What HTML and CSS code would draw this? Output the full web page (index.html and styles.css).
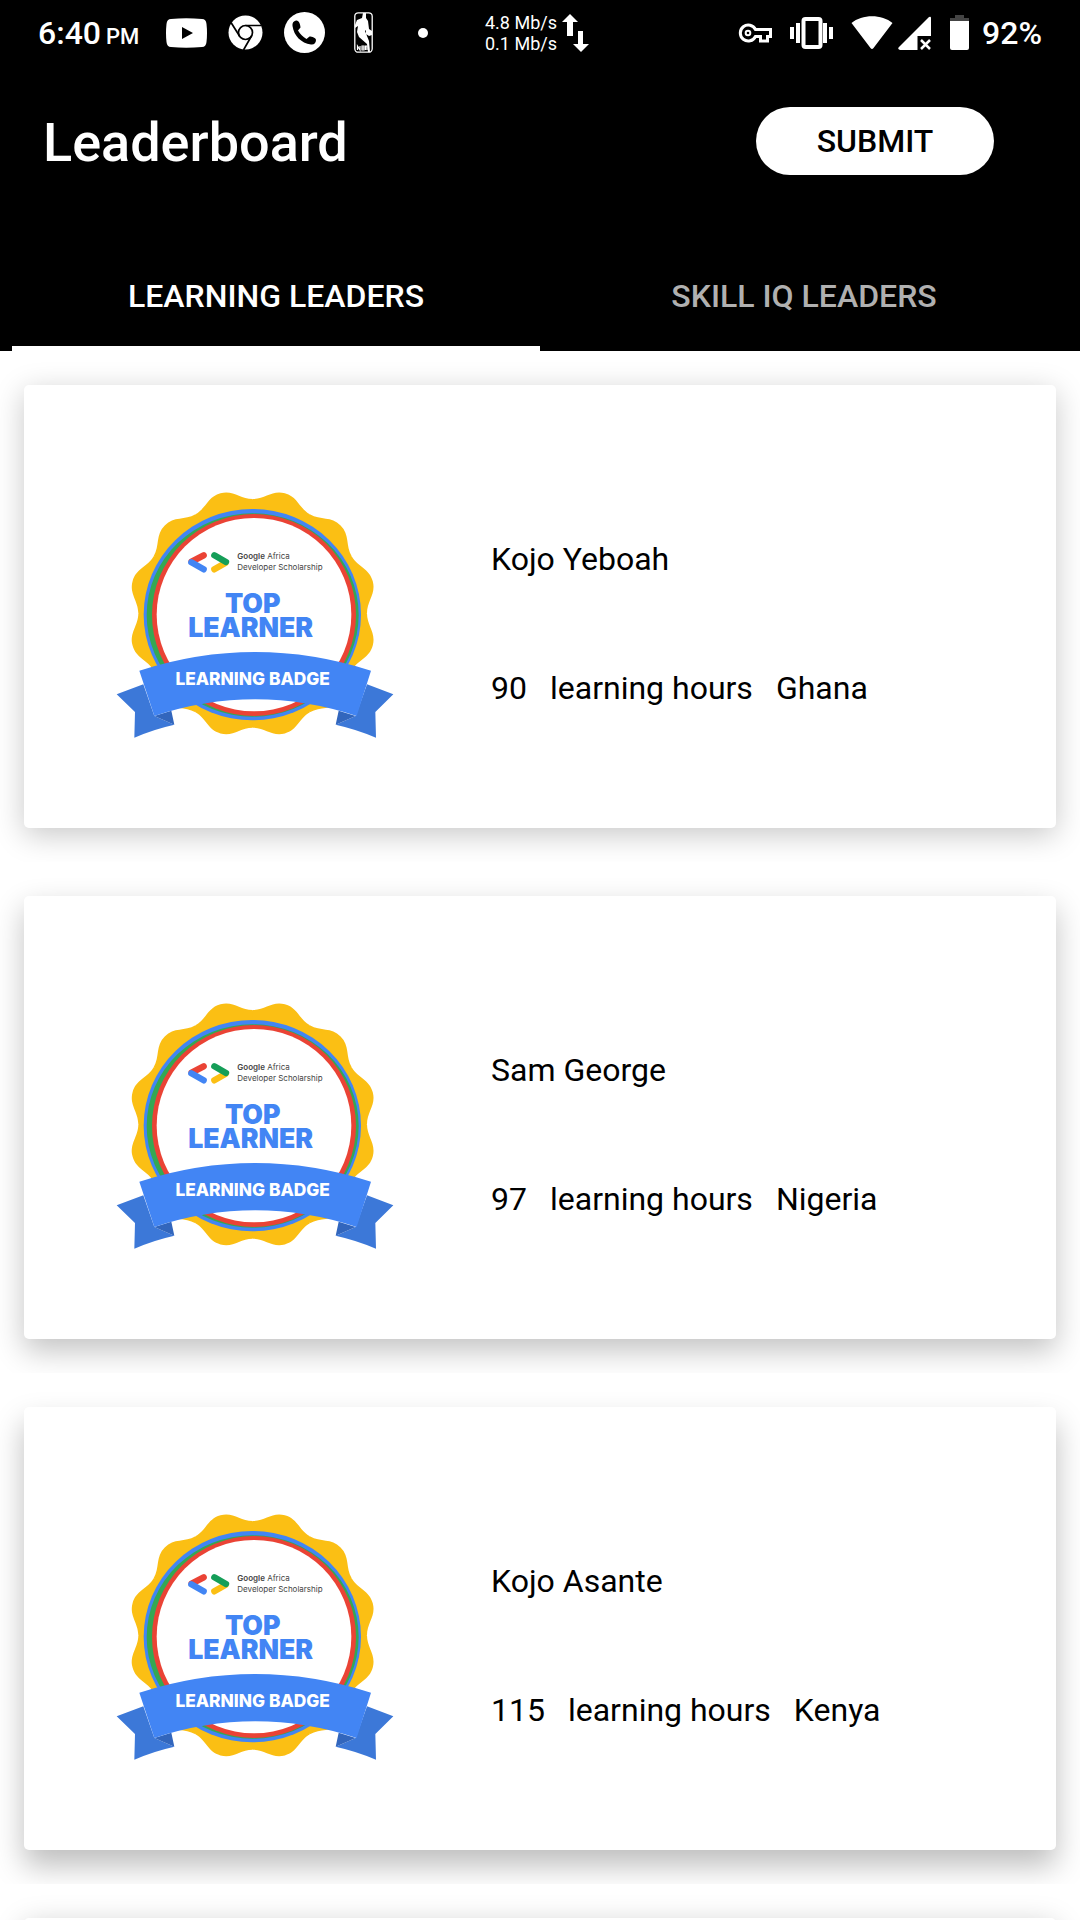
FILE: index.html
```html
<!DOCTYPE html>
<html lang="en">
<head>
<meta charset="utf-8">
<meta name="viewport" content="width=device-width, initial-scale=1">
<title>Leaderboard</title>
<link rel="stylesheet" href="styles.css">
</head>
<body>
<svg class="defs" width="0" height="0" aria-hidden="true">
  <defs>
    <path id="lobe" d="M0 0L-88.8-331.3C-52.1-341.1-40-373 0-373S52.1-341.1 88.8-331.3Z"/>
    <g id="lobes"><use href="#lobe" transform="rotate(15)"/><use href="#lobe" transform="rotate(45)"/><use href="#lobe" transform="rotate(75)"/></g>
    <symbol id="badge" viewBox="0 0 930 840">
      <g fill="#fbbf14" transform="translate(458 430)">
        <circle r="341"/>
        <use href="#lobes"/><use href="#lobes" transform="rotate(90)"/><use href="#lobes" transform="rotate(180)"/><use href="#lobes" transform="rotate(270)"/>
      </g>
      <ellipse cx="457" cy="434" rx="326" ry="317" fill="#4285f4"/>
      <ellipse cx="458" cy="435" rx="318" ry="305" fill="#34a853"/>
      <ellipse cx="462" cy="435" rx="306" ry="303" fill="#ea4335"/>
      <ellipse cx="462" cy="434" rx="292" ry="290" fill="#fff"/>
      <g fill="none" stroke-width="19" stroke-linecap="round">
        <path stroke="#ea4335" d="M311 256L275 275"/>
        <path stroke="#4285f4" d="M274 277L311 298"/>
        <path stroke="#fbbf14" d="M376 279L343 298"/>
        <path stroke="#159e58" d="M343 256L378 276"/>
      </g>
      <text class="badge-org" x="412" y="267"><tspan class="badge-brand">Google</tspan> Africa</text>
      <text class="badge-org" x="412" y="299">Developer Scholarship</text>
      <text class="badge-title" x="458" y="429">TOP</text>
      <text class="badge-title" x="452" y="500">LEARNER</text>
      <path fill="#3c78d8" d="M50 673L130 643L163 738L223 764Q160 778 103 803L105 726ZM880 673L801 643L767 738L707 764Q770 778 828 803L826 726Z"/>
      <path fill="#3266bd" d="M163 738L214 722L223 764ZM767 738L716 722L707 764Z"/>
      <path fill="#4285f4" d="M118 602Q465 490 813 602L770 738Q465 638 163 738Z"/>
      <text class="badge-ribbon" x="458" y="644">LEARNING BADGE</text>
    </symbol>
  </defs>
</svg>

<div class="screen">
  <header class="top">
    <div class="status">
      <div class="clock"><span>6:40</span><small>PM</small></div>
      <div class="notices">
        <svg width="41" height="30" viewBox="0 0 41 30"><path fill="#fff" fill-rule="evenodd" d="M5 1Q20-.5 36 1Q40 1 40.500 6Q41.500 15 40.500 24Q40 29 36 29Q20 30.500 5 29Q1 29 .5 24Q-.5 15 .5 6Q1 1 5 1ZM16 9V21L27 15Z"/></svg>
        <svg width="35" height="35" viewBox="0 0 35 35"><circle cx="17.500" cy="17.500" r="17" fill="#fff"/><g fill="none" stroke="#000" stroke-width="1.700"><circle cx="17.500" cy="17.500" r="7"/><path d="M17.500 10.500H33M11.500 21L3 7.500M23.500 21L15.500 35"/></g></svg>
        <svg width="41" height="41" viewBox="0 0 41 41"><circle cx="20.500" cy="20.500" r="20.500" fill="#fff"/><path d="M12 8.500C9.500 9 8 11 8.500 14C10 24 17 31 27 32.500C30 33 32 31 32 28C32 26 28 24.500 25.500 24.500L22.500 27C19 25 16 22 14 18.500L16.500 15.500C16.500 13 15 8 12 8.500Z"/></svg>
        <svg width="19" height="41" viewBox="0 0 19 41"><rect x=".8" y=".8" width="17.400" height="39.400" rx="3.500" fill="none" stroke="#fff" stroke-width="1.300"/><path fill="#fff" d="M9 1H12V6L14 9L15 17L18 19V23L15 24L12 22V18L11 19L15 29L16 40H14L13 32L5 25L3 20L4 14L1 16V13L3 8L8 6Z"/><path fill="none" stroke="#fff" stroke-width="1.200" d="M3.500 38V34L6 38V34M8 34V38H10V34H8V36H10M11.500 38V34H13V38"/></svg>
        <svg width="10" height="10" viewBox="0 0 10 10"><circle cx="5" cy="5" r="5" fill="#fff"/></svg>
      </div>
      <div class="speed">
        <div>4.8 Mb/s<br>0.1 Mb/s</div>
        <svg width="27" height="38" viewBox="0 0 27 38"><path fill="#fff" d="M8 0L16 8H11V22H5V8H0ZM16 17H21V30H27L19 38L11 30H16Z"/></svg>
      </div>
      <div class="system">
        <svg width="34" height="20" viewBox="0 0 34 20"><path fill="none" stroke="#fff" stroke-width="3" d="M17.500 6.500H32.500V13.500H29.500V18H22.500V13.500H17.500A8 8 0 1 1 17.500 6.500Z"/><circle cx="10" cy="10" r="3.300" fill="#fff"/><circle cx="10" cy="10" r="1.300"/></svg>
        <svg width="43" height="32" viewBox="0 0 43 32"><rect x="13.500" y="2" width="17" height="28" rx="2" fill="none" stroke="#fff" stroke-width="4"/><path fill="#fff" d="M0 10H4V22H0ZM6 6H10V26H6ZM33 6H37V26H33ZM39 10H43V22H39Z"/></svg>
        <span class="signals">
          <svg width="42" height="33" viewBox="0 0 42 33"><path fill="#fff" d="M.5 7C11-2 31-2 41.500 7L22.500 32Q21 34 19.500 32Z"/></svg>
          <svg width="34" height="34" viewBox="0 0 34 34"><path fill="#fff" d="M31 1Q33 0 33 2V20H19.500V34H2Q-1 33 1 31Z"/><path fill="none" stroke="#fff" stroke-width="2.500" d="M23 24L32 33M32 24L23 33"/></svg>
        </span>
        <span class="power">
          <svg width="19" height="35" viewBox="0 0 19 35"><path fill="#444" d="M5 0H14V3H19V7H0V3H5Z"/><path fill="#fff" d="M0 6H19V33Q19 35 17 35H2Q0 35 0 33Z"/></svg>
          <span>92%</span>
        </span>
      </div>
    </div>
    <div class="appbar">
      <h1>Leaderboard</h1>
      <button class="submit" type="button">SUBMIT</button>
    </div>
    <nav class="tabs" role="tablist">
      <button class="tab active" type="button" role="tab" aria-selected="true">LEARNING LEADERS</button>
      <button class="tab" type="button" role="tab" aria-selected="false">SKILL IQ LEADERS</button>
    </nav>
  </header>
  <ul class="list">
    <li class="item">
      <article class="card">
        <svg class="badge"><use href="#badge"/></svg>
        <div class="info"><h2>Kojo Yeboah</h2><p><span>90</span><span>learning hours</span><span>Ghana</span></p></div>
      </article>
    </li>
    <li class="item">
      <article class="card">
        <svg class="badge"><use href="#badge"/></svg>
        <div class="info"><h2>Sam George</h2><p><span>97</span><span>learning hours</span><span>Nigeria</span></p></div>
      </article>
    </li>
    <li class="item">
      <article class="card">
        <svg class="badge"><use href="#badge"/></svg>
        <div class="info"><h2>Kojo Asante</h2><p><span>115</span><span>learning hours</span><span>Kenya</span></p></div>
      </article>
    </li>
    <li class="item"><article class="card"></article></li>
  </ul>
</div>
</body>
</html>
```
FILE: styles.css
```css
* { box-sizing: border-box; }
body {
  margin: 0;
  background: #fff;
  color: #000;
  font-family: Roboto, "Liberation Sans", sans-serif;
  font-size: 32px;
}
.defs { display: block; }
svg { flex: none; }
.screen { display: flex; flex-direction: column; height: 100vh; }
.top { flex: none; background: #000; color: #fff; }

.status {
  display: flex;
  align-items: center;
  height: 65px;
  padding: 0 38px;
  font-weight: 500;
}
.clock { display: flex; align-items: baseline; gap: 5px; width: 119px; }
.clock small { font-size: 22px; }
.notices { display: grid; grid-template-columns: repeat(5, 59px); place-items: center; }
.speed {
  display: flex;
  align-items: center;
  gap: 5px;
  margin-left: 33px;
  font-size: 18px;
  font-weight: 400;
  line-height: 21px;
}
.system { display: flex; align-items: center; gap: 18px; margin-left: auto; }
.signals { display: flex; gap: 5px; }
.power { display: flex; align-items: center; gap: 13px; }

.appbar {
  display: flex;
  align-items: center;
  justify-content: space-between;
  height: 152px;
  padding: 0 86px 0 43px;
}
h1 { margin: 0; padding-top: 3px; font-size: 54px; font-weight: 500; }
.submit {
  width: 238px;
  height: 68px;
  border: 0;
  border-radius: 34px;
  background: #fff;
  color: #000;
  font: 500 32px Roboto, sans-serif;
}
.tabs { display: flex; padding: 29px 12px 0; }
.tab {
  flex: 1;
  height: 105px;
  padding: 0;
  border: 0;
  border-bottom: 5px solid transparent;
  background: none;
  color: #b0b0b0;
  font: 500 32px Roboto, sans-serif;
}
.tab.active { border-color: #fff; color: #fff; }

.list { flex: 1; min-height: 0; margin: 0; padding: 0; list-style: none; overflow: hidden; }
.item { padding: 34px 24px; overflow: hidden; }
.card {
  display: flex;
  align-items: center;
  gap: 81px;
  padding: 85px 76px 78px;
  border-radius: 5px;
  background: #fff;
  box-shadow: 0 7px 30px rgba(0, 0, 0, .22);
}
.item:nth-child(2) .card { box-shadow: 0 12px 30px rgba(0, 0, 0, .24); }
.item:nth-child(3) .card { box-shadow: 0 16px 30px rgba(0, 0, 0, .26); }
.badge { width: 310px; height: 280px; }
.info { display: grid; gap: 86px; padding-top: 28px; line-height: 43px; }
h2, p { margin: 0; font-size: 32px; font-weight: 400; }
p { display: flex; gap: 23px; }

.badge-org { font: 400 24px Inter, sans-serif; fill: #444; }
.badge-brand { font-weight: 600; }
.badge-title { font: 900 80px Inter, sans-serif; fill: #4285f4; text-anchor: middle; }
.badge-ribbon { font: 800 52px Inter, sans-serif; fill: #fff; text-anchor: middle; }
```
